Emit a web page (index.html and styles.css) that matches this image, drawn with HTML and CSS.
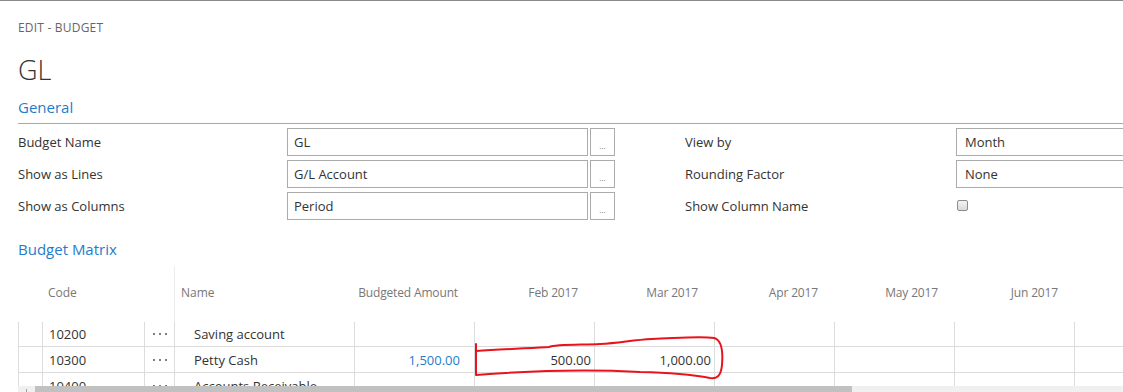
FILE: index.html
```html
<!DOCTYPE html>
<html lang="en">
<head>
<meta charset="utf-8">
<title>Edit - Budget</title>
<link rel="stylesheet" href="styles.css">
</head>
<body>
<div class="page">
  <div class="crumb">EDIT - BUDGET</div>
  <h1 class="title">GL</h1>
  <h2 class="section general">General</h2>

  <div class="fields">
    <div class="group group-left">
      <div class="row">
        <span class="label">Budget Name</span>
        <span class="input">GL</span>
        <span class="lookup">...</span>
      </div>
      <div class="row">
        <span class="label">Show as Lines</span>
        <span class="input">G/L Account</span>
        <span class="lookup">...</span>
      </div>
      <div class="row">
        <span class="label">Show as Columns</span>
        <span class="input">Period</span>
        <span class="lookup">...</span>
      </div>
    </div>
    <div class="group group-right">
      <div class="row">
        <span class="label label-right">View by</span>
        <span class="input select">Month</span>
      </div>
      <div class="row">
        <span class="label label-right">Rounding Factor</span>
        <span class="input select">None</span>
      </div>
      <div class="row">
        <span class="label label-right">Show Column Name</span>
        <span class="checkbox"></span>
      </div>
    </div>
  </div>

  <h2 class="section matrix-title">Budget Matrix</h2>

  <div class="matrix">
    <div class="mhead">
      <span class="hc"></span>
      <span class="hc">Code</span>
      <span class="hc"></span>
      <span class="hc hc-name">Name</span>
      <span class="hc num">Budgeted Amount</span>
      <span class="hc num">Feb 2017</span>
      <span class="hc num">Mar 2017</span>
      <span class="hc num">Apr 2017</span>
      <span class="hc num">May 2017</span>
      <span class="hc num">Jun 2017</span>
      <span class="hc num"></span>
    </div>
    <div class="mbody">
      <div class="rows">
        <div class="mrow">
          <span class="c"></span>
          <span class="c">10200</span>
          <span class="c dots"><i></i><i></i><i></i></span>
          <span class="c name">Saving account</span>
          <span class="c amt"></span>
          <span class="c val"></span>
          <span class="c val"></span>
          <span class="c val"></span>
          <span class="c val"></span>
          <span class="c val"></span>
          <span class="c val"></span>
        </div>
        <div class="mrow">
          <span class="c"></span>
          <span class="c">10300</span>
          <span class="c dots"><i></i><i></i><i></i></span>
          <span class="c name">Petty Cash</span>
          <span class="c amt link">1,500.00</span>
          <span class="c val">500.00</span>
          <span class="c val">1,000.00</span>
          <span class="c val"></span>
          <span class="c val"></span>
          <span class="c val"></span>
          <span class="c val"></span>
        </div>
        <div class="mrow">
          <span class="c"></span>
          <span class="c">10400</span>
          <span class="c dots"><i></i><i></i><i></i></span>
          <span class="c name">Accounts Receivable</span>
          <span class="c amt"></span>
          <span class="c val"></span>
          <span class="c val"></span>
          <span class="c val"></span>
          <span class="c val"></span>
          <span class="c val"></span>
          <span class="c val"></span>
        </div>
      </div>
    </div>
    <div class="hscroll">
      <span class="sarrow"></span>
      <span class="sthumb"></span>
    </div>
  </div>

  <svg class="annot" width="1123" height="392" viewBox="0 0 1123 392" aria-hidden="true">
    <path d="M476,343 L476,350 C505,348 535,347 549,346 C556,343 585,344 600,343 C620,342 632,339 652,338 C680,337 700,335 714,337 C722,339 723,352 722,364 C721,374 718,378 710,377 C694,374 680,372 640,371 C600,369 540,369 476,374 L476,346" fill="none" stroke="#e8141b" stroke-width="2" stroke-linejoin="round" stroke-linecap="round"/>
  </svg>
</div>
</body>
</html>
```

FILE: styles.css
```css
* { box-sizing: border-box; }

html, body {
  margin: 0;
  padding: 0;
  width: 1123px;
  height: 392px;
  overflow: hidden;
  background: #ffffff;
}

body {
  font-family: "Open Sans", "Noto Sans", sans-serif;
  color: #333333;
}

.page {
  position: relative;
  height: 392px;
  border-top: 1px solid #8a8a8a;
  padding-left: 18px;
}

.crumb {
  margin-top: 18px;
  height: 18px;
  line-height: 18px;
  font-size: 12px;
  color: #666666;
  letter-spacing: 0.2px;
}

.title {
  margin: 15px 0 0 0;
  height: 36px;
  line-height: 36px;
  font-size: 27px;
  font-weight: 300;
  color: #333333;
}

.section {
  margin: 0;
  font-size: 15px;
  font-weight: 400;
  line-height: 20px;
  color: #1f7ccc;
}

.general {
  margin-top: 9px;
  padding-bottom: 6px;
  border-bottom: 1px solid #a8a8a8;
}

.fields {
  display: flex;
  gap: 70px;
  margin-top: 4px;
}

.group {
  display: flex;
  flex-direction: column;
  gap: 4px;
}

.row {
  display: flex;
  align-items: center;
  height: 28px;
}

.label {
  width: 269px;
  font-size: 13px;
  color: #333333;
}

.label-right {
  width: 271px;
}

.input {
  display: flex;
  align-items: center;
  width: 301px;
  height: 28px;
  padding-left: 6px;
  border: 1px solid #ababab;
  font-size: 13px;
  color: #333333;
}

.select {
  padding-left: 8px;
  width: 302px;
}

.lookup {
  width: 25px;
  height: 28px;
  margin-left: 2px;
  border: 1px solid #ababab;
  font-size: 8px;
  color: #777777;
  text-align: center;
  line-height: 34px;
  letter-spacing: 0;
}

.checkbox {
  width: 11px;
  height: 11px;
  margin-left: 1px;
  margin-top: -1px;
  border: 1px solid #8c8c8c;
  border-radius: 2px;
  background: linear-gradient(#f4f4f4, #dadada);
}

.matrix-title {
  margin-top: 19px;
}

.matrix {
  margin-top: 7px;
  width: 1105px;
}

.mhead,
.mrow {
  display: grid;
  grid-template-columns: 24px 102px 30px 180px 120px repeat(6, 120px);
}

.mhead {
  height: 56px;
  align-items: stretch;
  font-size: 12px;
  color: #777777;
}

.hc {
  display: flex;
  align-items: center;
  padding: 0 6px 4px 6px;
  white-space: nowrap;
}

.hc-name {
  border-left: 1px solid #ececec;
}

.hc.num {
  justify-content: flex-end;
  padding-right: 16px;
  letter-spacing: -0.15px;
}

.mbody {
  height: 64px;
  overflow: hidden;
}

.rows {
  margin-top: -1px;
}

.mrow {
  height: 26px;
  font-size: 13px;
  color: #333333;
}

.c {
  display: flex;
  align-items: center;
  padding: 0 6px;
  border-left: 1px solid #dcdcdc;
  border-bottom: 1px solid #dcdcdc;
  white-space: nowrap;
  overflow: hidden;
}

.c.name {
  padding-left: 19px;
}

.c.amt {
  justify-content: flex-end;
  padding-right: 14px;
}

.c.val {
  justify-content: flex-end;
  padding-right: 3px;
}

.link {
  color: #1f7ccc;
}

.dots {
  justify-content: center;
  gap: 4px;
  padding: 0;
}

.dots i {
  display: block;
  width: 2px;
  height: 2px;
  background: #555555;
  border-radius: 1px;
}

.hscroll {
  display: flex;
  align-items: flex-start;
  height: 17px;
  width: 1105px;
  background: #f0f0f0;
}

.sarrow {
  width: 17px;
  height: 17px;
  position: relative;
}

.sarrow::before {
  content: "";
  position: absolute;
  left: 8px;
  top: 3px;
  width: 1px;
  height: 3px;
  background: #a0a0a0;
}

.sthumb {
  width: 817px;
  height: 17px;
  background: #c1c1c1;
}

.annot {
  position: absolute;
  left: 0;
  top: 0;
  pointer-events: none;
}
```
